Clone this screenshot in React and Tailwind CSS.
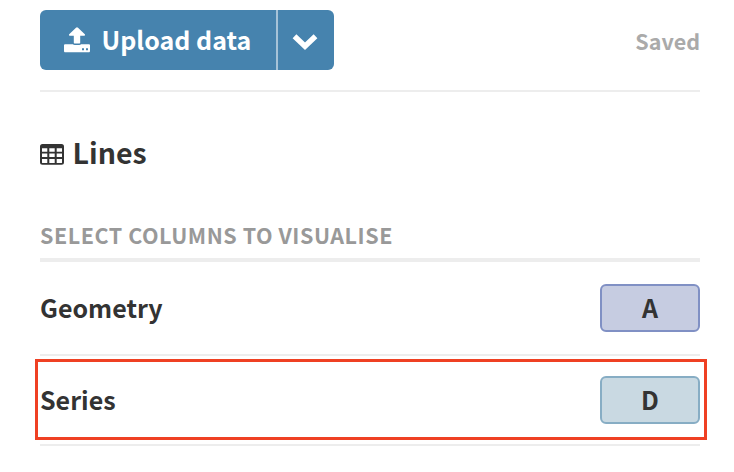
import React from 'react'

const UploadIcon = () => (
    <svg viewBox="0 0 26 26" className="w-[26px] h-[26px]" fill="currentColor">
        <path d="M13 .2c.4 0 .7.2 1 .5l6.800 6.600c.6.7.3 1.500-.6 1.500H16.200v6.800c0 .6-.4 1-1 1h-4.400c-.6 0-1-.4-1-1V8.800H5.800c-.9 0-1.200-.8-.6-1.500L12 .7c.3-.3.6-.5 1-.5z" />
        <path
            fillRule="evenodd"
            d="M1.300 17.200h7.600c.4.500 1 .7 1.900.7h4.400c.9 0 1.500-.2 1.900-.7h7.600c.8 0 1.300.5 1.300 1.300V24c0 .8-.5 1.300-1.300 1.300H1.300C.5 25.300 0 24.800 0 24v-5.500c0-.8.5-1.300 1.300-1.300z
            M18 21.200v2h2v-2z M22 21.200v2h2v-2z"
        />
    </svg>
)

const ChevronIcon = () => (
    <svg viewBox="0 0 26 18" className="w-[26px] h-[18px]" fill="none" stroke="currentColor" strokeWidth="5.400">
        <path d="M2.500 3.200 13 13.300 23.500 3.200" />
    </svg>
)

const TableIcon = () => (
    <svg viewBox="0 0 24 21" className="w-6 h-[21px]" fill="currentColor">
        <path
            fillRule="evenodd"
            d="M2.500 0h19A2.500 2.500 0 0 1 24 2.500v15.800a2.500 2.500 0 0 1-2.500 2.500h-19A2.500 2.500 0 0 1 0 18.300V2.500A2.500 2.500 0 0 1 2.500 0z
            M2 4.200v3.600h5.300V4.200z M9.300 4.200v3.600h5.400V4.200z M16.700 4.200v3.600H22V4.200z
            M2 9.500v3.600h5.300V9.500z M9.300 9.500v3.600h5.400V9.500z M16.700 9.500v3.600H22V9.500z
            M2 14.900v3.500q0 .6.600.6h4.700v-4.100z M9.300 14.900V19h5.400v-4.100z M16.700 14.900V19h4.700q.6 0 .6-.6v-3.500z"
        />
    </svg>
)

const columns = [
    { label: 'Geometry', value: 'A', color: 'bg-[#c6cce1] border-[#8090c4]' },
    { label: 'Series', value: 'D', color: 'bg-[#c9d9e2] border-[#87adc4]', highlighted: true },
]

const ColumnRow = ({ column }) => (
    <div className={`relative flex items-center justify-between border-b-2 border-[#ededed]
        ${column.highlighted ? 'h-[90px]' : 'h-[94px]'}`}>
        <span className="text-[25px] leading-9 pb-0.5">{column.label}</span>
        <span className={`flex items-center justify-center w-[100px] h-12 rounded-md border-2
            text-[25px] leading-9 pb-0.5 ${column.color}`}>
            {column.value}
        </span>
        {column.highlighted && (
            <div className="absolute -left-[5px] -right-[7px] top-[3px] h-[81px] border-3 border-[#ef4023]" />
        )}
    </div>
)

const App = () => {
    return (
        <div className="w-[734px] h-[472px] bg-white pl-10 pr-[34px] pt-2.5 overflow-hidden
            font-['Noto_Sans_CJK_SC',sans-serif] font-bold text-[#333]">
            <div className="flex items-center justify-between h-[82px] pb-5 border-b-2 border-[#ededed]">
                <div className="flex h-[60px] rounded-md overflow-hidden bg-[#4683ae] text-white">
                    <button className="flex items-center w-[236px] pl-6 gap-[11.5px]">
                        <UploadIcon />
                        <span className="text-[25px] leading-9 pb-0.5 whitespace-nowrap">Upload data</span>
                    </button>
                    <button className="flex items-center w-[58px] pl-3.5 pt-1 border-l-2 border-[#a6c3d8]">
                        <ChevronIcon />
                    </button>
                </div>
                <span className="text-[21.5px] leading-8 pt-0.5 text-[#aaa]">Saved</span>
            </div>

            <div className="flex items-center gap-[8.5px] mt-10 h-11">
                <TableIcon />
                <h2 className="text-[28.5px] leading-11 pb-1">Lines</h2>
            </div>

            <h3 className="mt-[43px] h-[43px] text-[21.5px] leading-8 tracking-[0.54px] text-[#999]
                border-b-4 border-[#ededed]">
                SELECT COLUMNS TO VISUALISE
            </h3>

            {columns.map((column) => (
                <ColumnRow key={column.label} column={column} />
            ))}
        </div>
    )
}

export default App
